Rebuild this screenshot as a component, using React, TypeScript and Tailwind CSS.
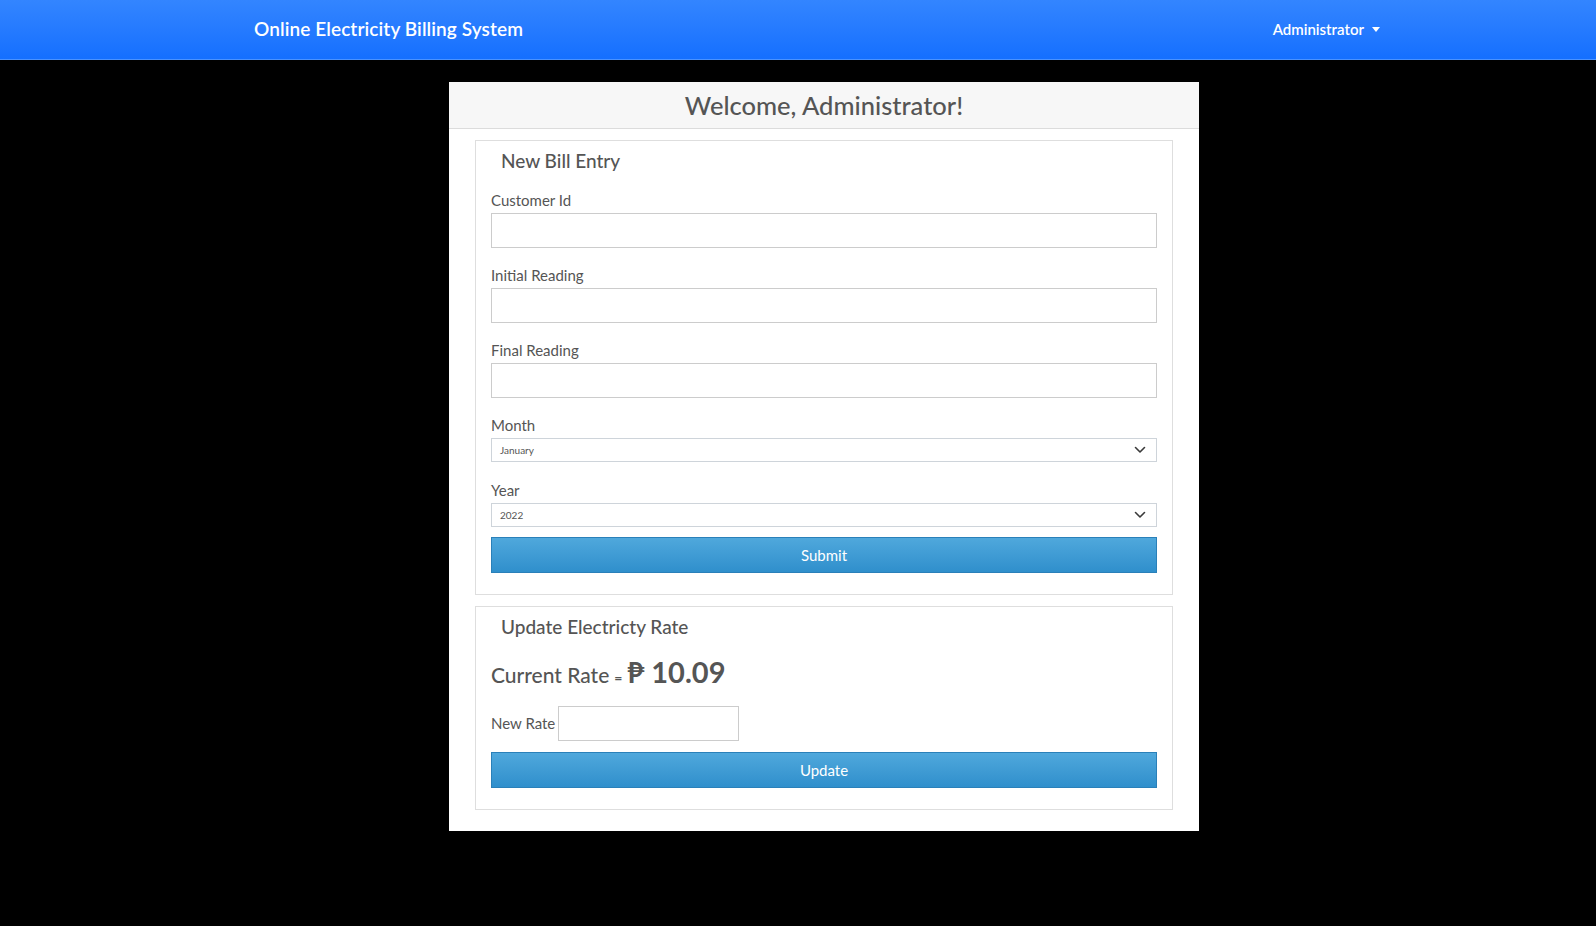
import React from "react";

function Chevron() {
  return (
    <svg width="12" height="8" viewBox="0 0 12 8" fill="none">
      <polyline points="1.5,1.5 6,6 10.5,1.5" stroke="#3a3a3a" strokeWidth="1.6" strokeLinecap="round" strokeLinejoin="round" />
    </svg>
  );
}

function Field({ label }: { label: string }) {
  return (
    <div className="mb-[17px]">
      <div className="text-[15px] leading-[21px] mb-[2px] text-[#555]">{label}</div>
      <input className="block w-full h-[35px] border border-[#ccc] bg-white outline-none" />
    </div>
  );
}

function SelectBox({ label, value, last }: { label: string; value: string; last?: boolean }) {
  return (
    <div className={last ? "mb-[10px]" : "mb-[18px]"}>
      <div className="text-[15px] leading-[21px] mb-[2px] text-[#555]">{label}</div>
      <div className="flex items-center justify-between h-[24px] border border-[#ced4da] bg-white pl-[8px] pr-[10px]">
        <span className="text-[10px] text-[#555]">{value}</span>
        <Chevron />
      </div>
    </div>
  );
}

function BlueButton({ text }: { text: string }) {
  return (
    <button className="block w-full h-[36px] border border-[#2a80b9] bg-gradient-to-b from-[#4fa8dc] to-[#2f8fcc] text-white text-[15px]">
      {text}
    </button>
  );
}

export default function App() {
  return (
    <div className="min-h-screen bg-black font-[family-name:Lato,'Open_Sans',sans-serif]">
      <nav className="h-[60px] flex items-center justify-between pl-[254px] pr-[216px] bg-gradient-to-b from-[#3385ff] to-[#146fff] border-b border-[#4a92ff]">
        <div className="text-white text-[19px] font-semibold tracking-[0.1px]">Online Electricity Billing System</div>
        <div className="flex items-center gap-[8px] text-white text-[15px] font-semibold">
          <span>Administrator</span>
          <span className="w-0 h-0 border-l-[4px] border-r-[4px] border-t-[5px] border-l-transparent border-r-transparent border-t-white" />
        </div>
      </nav>

      <div className="ml-[449px] mt-[22px] w-[750px] bg-white">
        <div className="h-[47px] flex items-center justify-center bg-[#f7f7f7] border-b border-[#dcdcdc]">
          <h1 className="text-[25.5px] text-[#555] font-medium">Welcome, Administrator!</h1>
        </div>
        <div className="px-[26px] pt-[11px] pb-[21px]">
          <div className="border border-[#dedede] px-[15px] pb-[21px]">
            <h2 className="pt-[9px] pl-[10px] text-[19px] leading-[22px] text-[#555] font-medium mb-[18px]">New Bill Entry</h2>
            <Field label="Customer Id" />
            <Field label="Initial Reading" />
            <Field label="Final Reading" />
            <SelectBox label="Month" value="January" />
            <SelectBox label="Year" value="2022" last />
            <BlueButton text="Submit" />
          </div>

          <div className="mt-[11px] border border-[#dedede] px-[15px] pb-[21px]">
            <h2 className="pt-[9px] pl-[10px] text-[19px] leading-[22px] text-[#555] font-medium mb-[12px]">Update Electricty Rate</h2>
            <div className="flex items-baseline h-[34px] text-[#555]">
              <span className="text-[21px] font-medium">Current Rate</span>
              <span className="text-[14px] font-bold mx-[5px]">=</span>
              <span className="text-[29px] font-bold">₱ 10.09</span>
            </div>
            <div className="flex items-center mt-[22px] mb-[11px]">
              <span className="text-[15px] text-[#555] mr-[3px]">New Rate</span>
              <input className="w-[181px] h-[35px] border border-[#ccc] bg-white outline-none" />
            </div>
            <BlueButton text="Update" />
          </div>
        </div>
      </div>
    </div>
  );
}
